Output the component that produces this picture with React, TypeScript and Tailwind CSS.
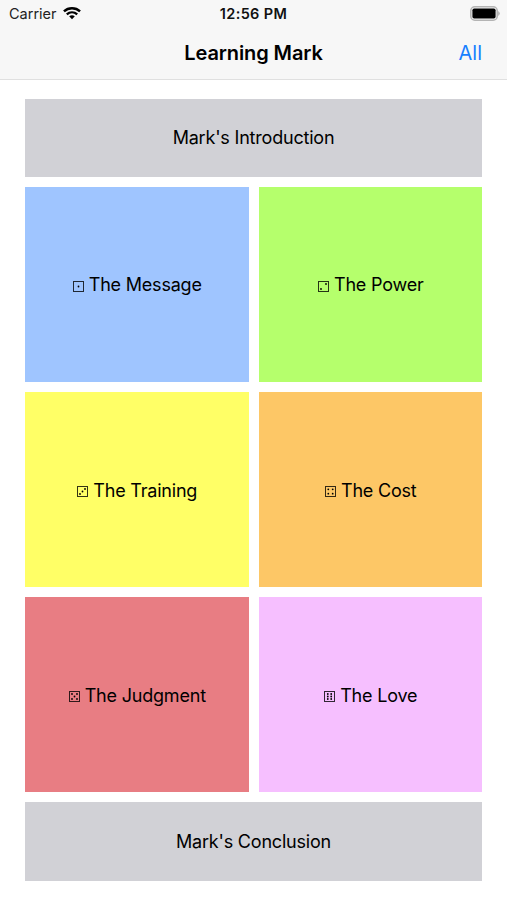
const pips: { [key: number]: number[][] } = {
  1: [[5.5, 5.5]],
  2: [[3, 8], [8, 3]],
  3: [[3, 8], [5.5, 5.5], [8, 3]],
  4: [[3.3, 3.3], [7.7, 3.3], [3.3, 7.7], [7.7, 7.7]],
  5: [[3, 3], [8, 3], [5.5, 5.5], [3, 8], [8, 8]],
  6: [[3.8, 3], [7.2, 3], [3.8, 5.5], [7.2, 5.5], [3.8, 8], [7.2, 8]],
};

const sections = [
  { die: 1, title: "The Message", color: "bg-[#9fc5ff]" },
  { die: 2, title: "The Power", color: "bg-[#b5ff6c]" },
  { die: 3, title: "The Training", color: "bg-[#ffff66]" },
  { die: 4, title: "The Cost", color: "bg-[#fdc766]" },
  { die: 5, title: "The Judgment", color: "bg-[#e87d83]" },
  { die: 6, title: "The Love", color: "bg-[#f6bfff]" },
];

function Die({ value }: { value: number }) {
  return (
    <svg className="mt-[2px] mr-[5px] h-[11px] w-[11px]" viewBox="0 0 11 11">
      <rect x="0.5" y="0.5" width="10" height="10" fill="none" stroke="black" strokeOpacity="0.8" />
      {pips[value].map(([x, y]) => (
        <circle key={`${x}-${y}`} cx={x} cy={y} r="0.9" />
      ))}
    </svg>
  );
}

export default function App() {
  return (
    <div className="flex h-[900px] w-[507px] flex-col bg-white font-[Inter,sans-serif] text-black">
      <header className="h-20 border-b border-[#e0e0e0] bg-[#f7f7f7]">
        <div className="grid h-7 grid-cols-[1fr_auto_1fr] items-center px-[7px] text-[14.5px]">
          <div className="flex items-center gap-[6px] pl-[2px] text-[#222222]">
            <span>Carrier</span>
            <svg className="mb-[2px] h-[14px] w-[18px]" viewBox="0 0 19 14" fill="none" stroke="black">
              <path d="M1 5.2C5.8.8 13.2.8 18 5.2" strokeWidth="2.6" />
              <path d="M4 8.4C7.2 5.6 11.8 5.6 15 8.4" strokeWidth="2.5" />
              <path d="M9.5 13.5L6.5 10.5Q9.5 8.2 12.5 10.5Z" fill="black" stroke="none" />
            </svg>
          </div>
          <span className="text-center font-semibold tracking-[0.35px] text-[#111111]">12:56 PM</span>
          <svg className="mb-[2px] h-[15px] w-[30px] justify-self-end" viewBox="0 0 30 15">
            <rect x="0.8" y="0.8" width="26.4" height="13.4" rx="4" fill="none" stroke="#b4b4b4" strokeWidth="1.6" />
            <rect x="2.4" y="2.4" width="23.2" height="10.2" rx="1.8" />
            <path d="M28.3 5Q31 7.5 28.3 10Z" fill="#a0a0a0" />
          </svg>
        </div>
        <div className="grid h-[50px] grid-cols-3 items-center px-[25px] text-xl">
          <h1 className="col-start-2 text-center font-semibold tracking-[-0.1px] whitespace-nowrap">
            Learning Mark
          </h1>
          <span className="text-right text-[#187fff]">All</span>
        </div>
      </header>

      <main className="grid grid-cols-2 gap-[10px] px-[25px] pt-[18.6px] text-lg tracking-[-0.2px]">
        <div className="col-span-2 flex h-[78px] items-center justify-center bg-[#d1d1d6] pt-px">
          Mark's Introduction
        </div>
        {sections.map((section) => (
          <div
            key={section.die}
            className={`flex h-[195.3px] items-center justify-center pt-[2px] pl-px ${section.color}`}
          >
            <Die value={section.die} />
            {section.title}
          </div>
        ))}
        <div className="col-span-2 flex h-[78.4px] items-center justify-center bg-[#d1d1d6] pt-px">
          Mark's Conclusion
        </div>
      </main>
    </div>
  );
}
